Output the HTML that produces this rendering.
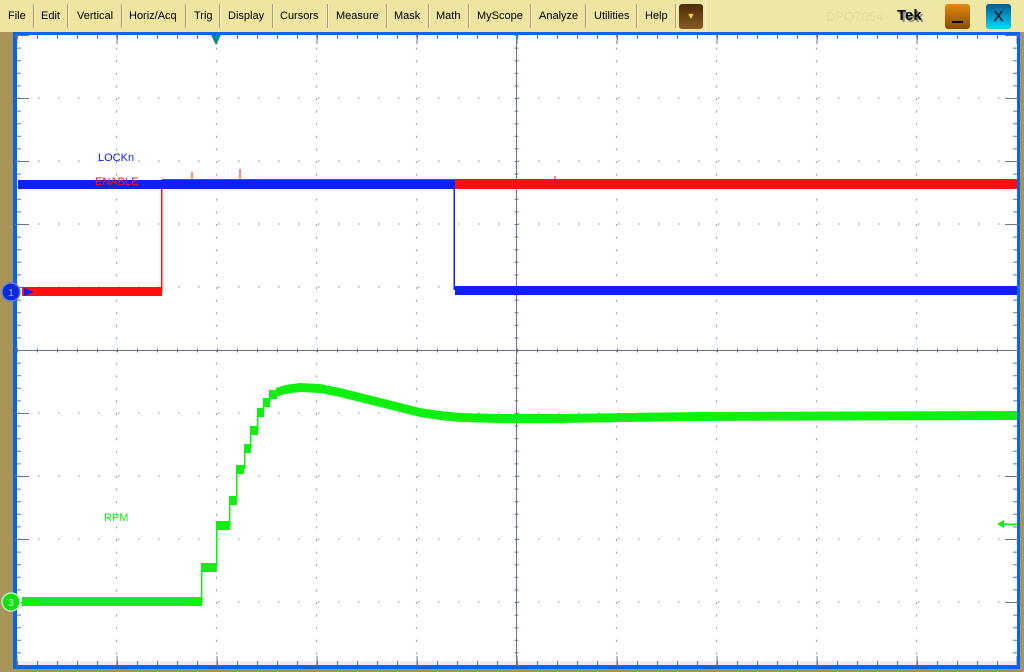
<!DOCTYPE html>
<html><head><meta charset="utf-8"><style>
html,body{margin:0;padding:0;width:1024px;height:672px;overflow:hidden;background:#a89458;font-family:"Liberation Sans",sans-serif}
#menu{position:absolute;left:0;top:0;width:1024px;height:32px;background:#ede5a0}
.m{position:absolute;top:10px;font-size:11px;color:#000}
.s{position:absolute;top:4px;width:1px;height:24px;background:#b09870;border-right:1px solid #f8f2c8}
</style></head><body>
<div id="menu">
<span class="m" style="left:8px">File</span><div class="s" style="left:33px"></div>
<span class="m" style="left:41px">Edit</span><div class="s" style="left:67px"></div>
<span class="m" style="left:77px">Vertical</span><div class="s" style="left:121px"></div>
<span class="m" style="left:129px">Horiz/Acq</span><div class="s" style="left:185px"></div>
<span class="m" style="left:194px">Trig</span><div class="s" style="left:219px"></div>
<span class="m" style="left:228px">Display</span><div class="s" style="left:272px"></div>
<span class="m" style="left:280px">Cursors</span><div class="s" style="left:327px"></div>
<span class="m" style="left:336px">Measure</span><div class="s" style="left:386px"></div>
<span class="m" style="left:394px">Mask</span><div class="s" style="left:428px"></div>
<span class="m" style="left:436px">Math</span><div class="s" style="left:468px"></div>
<span class="m" style="left:477px">MyScope</span><div class="s" style="left:530px"></div>
<span class="m" style="left:539px">Analyze</span><div class="s" style="left:585px"></div>
<span class="m" style="left:594px">Utilities</span><div class="s" style="left:636px"></div>
<span class="m" style="left:645px">Help</span><div class="s" style="left:675px"></div>
<div style="position:absolute;left:679px;top:4px;width:24px;height:25px;border-radius:3px;background:linear-gradient(#4a2a05,#8a5a28);color:#f0d040;font-size:9px;text-align:center;line-height:25px">▼</div>
<div style="position:absolute;left:705px;top:0;width:319px;height:32px;background:#efe7a4;border-left:1px solid #f8f2cc"></div>
<span style="position:absolute;left:826px;top:9px;font-size:13px;color:#e4dc98">DPO7054</span>
<span style="position:absolute;left:897px;top:7px;font-size:15px;font-weight:bold;color:#000;text-shadow:2px 2px 0 #888">Tek</span>
<div style="position:absolute;left:945px;top:4px;width:25px;height:25px;border-radius:3px;background:linear-gradient(#e08a10,#8a4a05)"><div style="position:absolute;left:7px;top:17px;width:11px;height:2px;background:#000"></div></div>
<div style="position:absolute;left:986px;top:4px;width:25px;height:25px;border-radius:3px;background:linear-gradient(#005a90,#00d8ff);text-align:center;font-size:15px;line-height:26px;color:#000">X</div>
</div>
<svg style="position:absolute;left:0;top:0" width="1024" height="672" viewBox="0 0 1024 672">
<rect x="13" y="32" width="1007" height="637" fill="#0066ee"/>
<rect x="17" y="35" width="1000" height="630" fill="#fff"/>
<rect x="17" y="661" width="1000" height="4" fill="#ececec"/>
<g stroke="#9aa0b4" stroke-width="1.2">
<g stroke-dasharray="1.5 18.5" stroke-dashoffset="-1">
<line x1="17" y1="98" x2="1017" y2="98"/><line x1="17" y1="161" x2="1017" y2="161"/><line x1="17" y1="224" x2="1017" y2="224"/><line x1="17" y1="287" x2="1017" y2="287"/><line x1="17" y1="413" x2="1017" y2="413"/><line x1="17" y1="476" x2="1017" y2="476"/><line x1="17" y1="539" x2="1017" y2="539"/><line x1="17" y1="602" x2="1017" y2="602"/>
</g>
<g stroke-dasharray="2 10.6">
<line x1="116.5" y1="35" x2="116.5" y2="665"/><line x1="216.5" y1="35" x2="216.5" y2="665"/><line x1="316.5" y1="35" x2="316.5" y2="665"/><line x1="416.5" y1="35" x2="416.5" y2="665"/><line x1="616.5" y1="35" x2="616.5" y2="665"/><line x1="716.5" y1="35" x2="716.5" y2="665"/><line x1="816.5" y1="35" x2="816.5" y2="665"/><line x1="916.5" y1="35" x2="916.5" y2="665"/>
</g>
</g>
<g stroke="#6a7590" stroke-width="1">
<line x1="516.5" y1="35" x2="516.5" y2="665"/><line x1="17" y1="350.5" x2="1017" y2="350.5"/>
<g stroke-dasharray="1 19" stroke-width="4"><line x1="17" y1="37" x2="1017" y2="37"/><line x1="17" y1="663" x2="1017" y2="663"/><line x1="17" y1="350.5" x2="1017" y2="350.5"/></g>
<g stroke-dasharray="1 11.6" stroke-width="4"><line x1="19" y1="35" x2="19" y2="665"/><line x1="1015" y1="35" x2="1015" y2="665"/><line x1="516.5" y1="35" x2="516.5" y2="665"/></g>
<g stroke-dasharray="1 99" stroke-width="10"><line x1="16.5" y1="39" x2="1017" y2="39"/><line x1="16.5" y1="661" x2="1017" y2="661"/></g>
<g stroke-dasharray="1 62" stroke-width="14"><line x1="22" y1="35" x2="22" y2="665"/><line x1="1012" y1="35" x2="1012" y2="665"/></g>
</g>
<polygon points="211,35 221,35 216,45" fill="#008890"/>
<g fill="#ff1010">
<rect x="22" y="287" width="140" height="9"/>
<rect x="161" y="188" width="1.5" height="103"/>
<rect x="162" y="179" width="855" height="10"/>
</g>
<g stroke="#ff1010" stroke-width="1"><line x1="192" y1="172" x2="192" y2="180"/><line x1="240" y1="169" x2="240" y2="180"/><line x1="555" y1="176" x2="555" y2="180"/></g>
<g fill="#1020f0">
<rect x="18" y="180" width="437" height="9"/>
<rect x="453.5" y="184" width="1.5" height="106"/>
<rect x="455" y="286" width="562" height="9"/>
</g>
<g fill="#10f010">
<rect x="22" y="597" width="180" height="9"/>
<rect x="201" y="563" width="16" height="9"/><rect x="201" y="563" width="1.5" height="40"/>
<rect x="216" y="521" width="14" height="9"/><rect x="216" y="521" width="1.5" height="45"/>
<rect x="229" y="496" width="8" height="9"/><rect x="229" y="496" width="1.5" height="30"/>
<rect x="236" y="465" width="8" height="9"/><rect x="236" y="465" width="1.5" height="35"/>
<rect x="244" y="444" width="7" height="9"/><rect x="244" y="444" width="1.5" height="25"/>
<rect x="250" y="426" width="8" height="9"/><rect x="250" y="426" width="1.5" height="22"/>
<rect x="257" y="408" width="7" height="9"/><rect x="257" y="408" width="1.5" height="22"/>
<rect x="263" y="398" width="7" height="9"/><rect x="263" y="398" width="1.5" height="14"/>
<rect x="269" y="390" width="8" height="9"/><rect x="269" y="390" width="1.5" height="12"/>
</g>
<path d="M276 388 L285 385 L300 383 L320 384 L340 388 L360 393 L380 398 L400 403 L420 408 L440 411 L460 413 L500 414 L560 414 L700 412 L1017 411 L1017 420 L700 421 L560 423 L500 423 L460 422 L440 420 L420 417 L400 412 L380 407 L360 402 L340 397 L320 393 L300 392 L285 394 L276 397Z" fill="#10f010"/>
<text x="98" y="161" font-size="11" fill="#1020f0">LOCKn</text>
<text x="95" y="185" font-size="11" fill="#ff1010">ENABLE</text>
<text x="104" y="521" font-size="11" fill="#10f010">RPM</text>
<circle cx="11" cy="292" r="9" fill="#0a2ad8" stroke="#6080f0" stroke-width="1.5"/>
<text x="11" y="296" font-size="10" fill="#9ab0ff" text-anchor="middle">1</text>
<polygon points="24,288 34,292 24,296" fill="#1020f0"/>
<circle cx="11" cy="602" r="9" fill="#10e010" stroke="#c0f0c0" stroke-width="1.5"/>
<text x="11" y="606" font-size="10" fill="#e0ffe0" text-anchor="middle">3</text>
<polygon points="24,598 34,602 24,606" fill="#10f010"/>
<polygon points="997,524 1004,520 1004,528" fill="#10f010"/><rect x="1003" y="523.5" width="14" height="1.5" fill="#10f010"/>
</svg>
</body></html>
